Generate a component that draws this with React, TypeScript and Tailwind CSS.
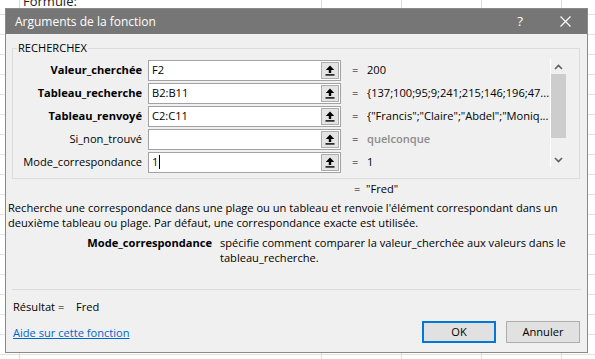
import React from "react";

const font = { fontFamily: '"Open Sans", "Noto Sans", Arial, sans-serif' };

type Row = { label: string; bold: boolean; input: string; value: string; muted?: boolean; cursor?: boolean };

const rows: Row[] = [
  { label: "Valeur_cherchée", bold: true, input: "F2", value: "200" },
  { label: "Tableau_recherche", bold: true, input: "B2:B11", value: "{137;100;95;9;241;215;146;196;47..." },
  { label: "Tableau_renvoyé", bold: true, input: "C2:C11", value: '{"Francis";"Claire";"Abdel";"Moniq...' },
  { label: "Si_non_trouvé", bold: false, input: "", value: "quelconque", muted: true },
  { label: "Mode_correspondance", bold: false, input: "1", value: "1", cursor: true },
];

function RefIcon() {
  return (
    <svg width="10" height="11" viewBox="0 0 10 11">
      <path d="M5 0.5 L9.2 5 H6.2 V8 H3.8 V5 H0.8 Z" fill="#000" />
      <rect x="0.5" y="9.2" width="9" height="1.4" fill="#000" />
    </svg>
  );
}

function Chevron({ up }: { up: boolean }) {
  return (
    <svg width="9" height="6" viewBox="0 0 9 6">
      <path d={up ? "M1 5 L4.5 1.5 L8 5" : "M1 1 L4.5 4.5 L8 1"} stroke="#606060" strokeWidth="1.6" fill="none" />
    </svg>
  );
}

export default function App() {
  const vLines = [19, 321, 401, 481, 561];
  const hLines = [14, 34, 54, 74, 94, 114, 134, 154, 174, 194, 214, 234, 254, 274, 294, 314, 334, 354];
  return (
    <div className="relative w-[595px] h-[359px] overflow-hidden bg-white text-[11.1px] text-black" style={font}>
      <div className="absolute inset-0">
        {vLines.map((x) => (
          <div key={"v" + x} className="absolute top-0 bottom-0 w-px bg-[#dadada]" style={{ left: x }} />
        ))}
        {hLines.map((y) => (
          <div key={"h" + y} className="absolute left-0 right-0 h-px bg-[#e2e2e2]" style={{ top: y }} />
        ))}
        <div className="absolute left-[22px] top-[-8px] text-[13px] text-[#222] bg-white px-[1px]">Formule:</div>
      </div>

      <div className="absolute left-[5px] top-[8px] w-[583px] h-[345px] border border-[#8a8a8a] bg-[#f0f0f0] flex flex-col">
        <div className="h-[25px] shrink-0 bg-[#767676] text-white flex items-center pl-[9px] pr-[16px]">
          <span className="text-[12px] flex-1">Arguments de la fonction</span>
          <span className="text-[13.5px] mr-[37px]">?</span>
          <svg width="11" height="11" viewBox="0 0 11 11">
            <path d="M0.5 0.5 L10.5 10.5 M10.5 0.5 L0.5 10.5" stroke="#fff" strokeWidth="1.2" />
          </svg>
        </div>

        <div className="flex flex-col px-[6px] pt-[7px]">
          <fieldset className="border border-[#dcdcdc] w-[568px] h-[138px] px-0 pt-0">
            <legend className="ml-[4px] px-[1px] text-[11.1px] leading-[14px]">RECHERCHEX</legend>
            <div className="flex pt-[5px]">
              <div className="flex flex-col gap-[3px] w-[537px]">
                {rows.map((r) => (
                  <div key={r.label} className="flex items-center h-[20px]">
                    <div className={"w-[129px] text-right whitespace-nowrap " + (r.bold ? "font-bold" : "")}>{r.label}</div>
                    <div className="ml-[6px] w-[193px] h-[21px] bg-white border border-[#a2a2a2] flex items-center">
                      <div className="flex-1 pl-[3px] flex items-center whitespace-nowrap">
                        {r.input}
                        {r.cursor && <span className="inline-block w-px h-[14px] bg-black ml-[1px]" />}
                      </div>
                      <div className="w-[18px] h-[17px] mr-[1px] bg-[#e4e4e4] border border-[#adadad] flex items-center justify-center">
                        <RefIcon />
                      </div>
                    </div>
                    <div className="ml-[11px] w-[15px]">=</div>
                    <div className={"whitespace-nowrap " + (r.muted ? "text-[#8c8c8c] font-semibold" : "")}>{r.value}</div>
                  </div>
                ))}
              </div>
              <div className="w-[16px] h-[108px] mt-[-1px] border-l border-white bg-[#f0f0f0] flex flex-col items-center">
                <div className="h-[15px] flex items-center"><Chevron up /></div>
                <div className="w-[15px] h-[64px] bg-[#cdcdcd]" />
                <div className="flex-1" />
                <div className="h-[15px] flex items-center"><Chevron up={false} /></div>
              </div>
            </div>
          </fieldset>
        </div>

        <div className="flex h-[18px] items-center mt-[1px] pl-[348px] whitespace-nowrap">
          <span className="w-[12px]">=</span>
          <span>"Fred"</span>
        </div>
        <div className="pl-[2px] mt-[2px] leading-[15px] whitespace-nowrap">
          <div>Recherche une correspondance dans une plage ou un tableau et renvoie l'élément correspondant dans un</div>
          <div>deuxième tableau ou plage. Par défaut, une correspondance exacte est utilisée.</div>
        </div>
        <div className="flex mt-[5px] leading-[15px]">
          <div className="w-[206px] text-right font-bold whitespace-nowrap">Mode_correspondance</div>
          <div className="pl-[8px] whitespace-nowrap">
            <div>spécifie comment comparer la valeur_cherchée aux valeurs dans le</div>
            <div>tableau_recherche.</div>
          </div>
        </div>

        <div className="mx-[6px] mt-[24px] h-px bg-[#dadada]" />
        <div className="flex items-center h-[16px] mt-[9px] pl-[7px] whitespace-nowrap">
          <span className="w-[63px]">Résultat =</span>
          <span>Fred</span>
        </div>
        <div className="flex items-end justify-between pl-[7px] pr-[7px] mt-[6px]">
          <a className="text-[#0066cc] underline mb-[1px] whitespace-nowrap">Aide sur cette fonction</a>
          <div className="flex gap-[10px]">
            <button className="w-[74px] h-[22px] bg-[#e1e1e1] border-2 border-[#0078d7] flex items-center justify-center">OK</button>
            <button className="w-[74px] h-[22px] bg-[#e1e1e1] border border-[#adadad] flex items-center justify-center">Annuler</button>
          </div>
        </div>
      </div>
    </div>
  );
}
